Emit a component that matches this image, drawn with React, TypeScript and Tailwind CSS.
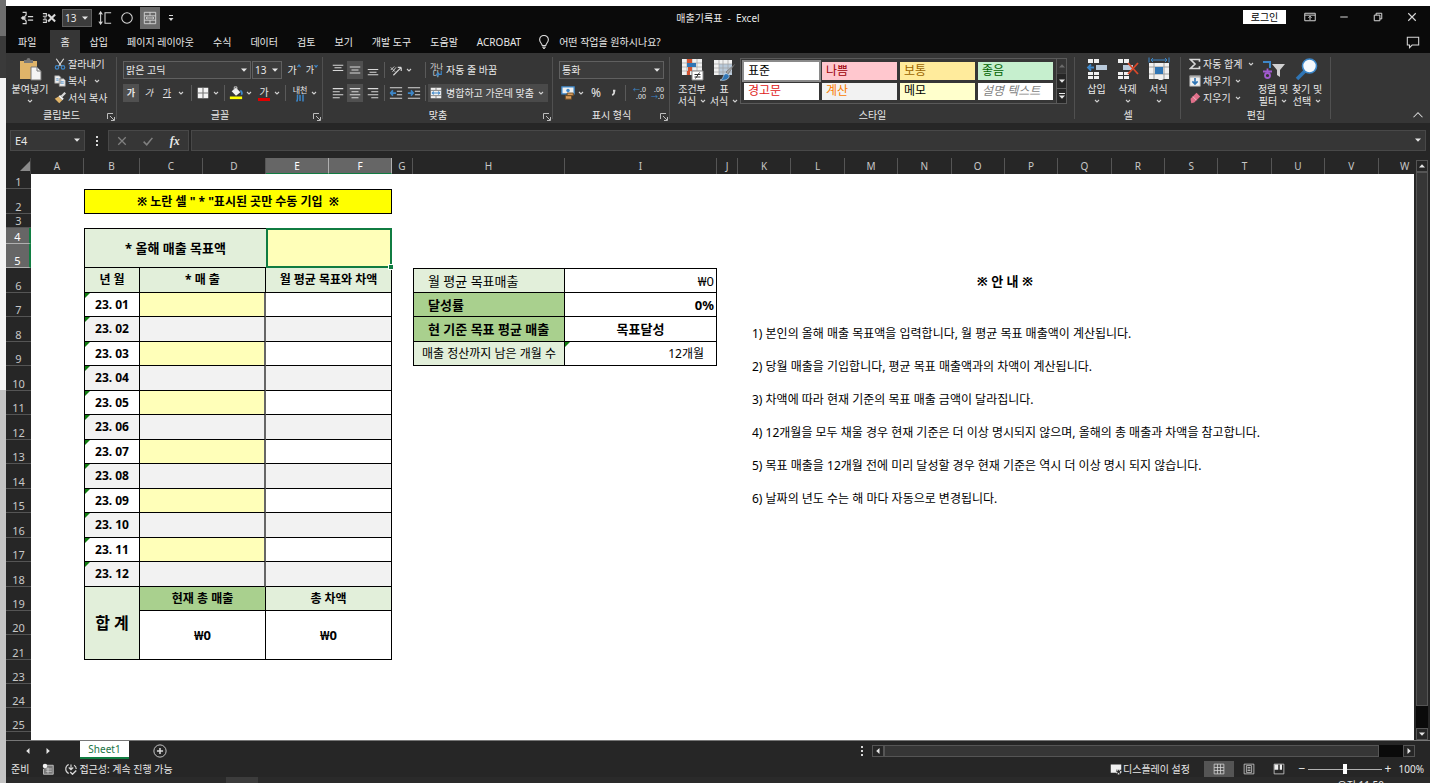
import React, { useState } from 'react';

const COLUMNS = 'ABCDEFGHIJKLMNOPQRSTUVW'.split('');
const SELECTED_COLUMNS = ['E', 'F'];

const RIBBON_TABS = ['파일', '홈', '삽입', '페이지 레이아웃', '수식', '데이터', '검토', '보기', '개발 도구', '도움말', 'ACROBAT'];

const CELL_STYLES = [
    { label: '표준', className: 'bg-white text-black outline-2 outline-[#8a8a8a]' },
    { label: '나쁨', className: 'bg-[#ffc7ce] text-[#9c0006]' },
    { label: '보통', className: 'bg-[#ffeb9c] text-[#9c6500]' },
    { label: '좋음', className: 'bg-[#c6efce] text-[#006100]' },
    { label: '경고문', className: 'bg-white text-[#e02020]' },
    { label: '계산', className: 'bg-[#f2f2f2] text-[#fa7d00]' },
    { label: '메모', className: 'bg-[#ffffcc] text-black' },
    { label: '설명 텍스트', className: 'bg-white text-[#7f7f7f] italic' },
];

const MONTHS = ['01', '02', '03', '04', '05', '06', '07', '08', '09', '10', '11', '12'];

const GUIDE = [
    '1) 본인의 올해 매출 목표액을 입력합니다, 월 평균 목표 매출액이 계산됩니다.',
    '2) 당월 매출을 기입합니다, 평균 목표 매출액과의 차액이 계산됩니다.',
    '3) 차액에 따라 현재 기준의 목표 매출 금액이 달라집니다.',
    '4) 12개월을 모두 채울 경우 현재 기준은 더 이상 명시되지 않으며, 올해의 총 매출과 차액을 참고합니다.',
    '5) 목표 매출을 12개월 전에 미리 달성할 경우 현재 기준은 역시 더 이상 명시 되지 않습니다.',
    '6) 날짜의 년도 수는 해 마다 자동으로 변경됩니다.',
];

interface IconProps {
    className?: string;
    children?: React.ReactNode;
}

// 16px line icon base
const Icon: React.FC<IconProps> = ({ className = 'size-4', children }) => (
    <svg viewBox="0 0 16 16" className={`shrink-0 ${className}`} fill="none" stroke="#d8d8d8" strokeWidth="1" aria-hidden="true">
        {children}
    </svg>
);

const BigIcon: React.FC<IconProps> = ({ children }) => (
    <svg viewBox="0 0 24 24" className="size-6 shrink-0" fill="none" aria-hidden="true">
        {children}
    </svg>
);

const Chevron = () => (
    <svg viewBox="0 0 6 6" className="size-1.5 shrink-0" fill="none" stroke="#d0d0d0" strokeWidth="1.1" aria-hidden="true">
        <path d="M1 2l2 2 2-2" />
    </svg>
);

const Triangle: React.FC<{ className?: string }> = ({ className = '' }) => (
    <svg viewBox="0 0 6 6" className={`size-1.5 shrink-0 ${className}`} fill="#e6e6e6" aria-hidden="true">
        <path d="M0 1.5h6L3 4.8z" />
    </svg>
);

const Separator = () => <span className="h-4 w-px shrink-0 bg-[#5a5a5a]" />;

const Dots = () => (
    <svg viewBox="0 0 4 10" className="h-2.5 w-1 shrink-0" fill="#d8d8d8" aria-hidden="true">
        <path d="M1 0h2v2H1zM1 4h2v2H1zM1 8h2v2H1z" />
    </svg>
);

interface IconButtonProps {
    label: string;
    className?: string;
    children: React.ReactNode;
}

const IconButton: React.FC<IconButtonProps> = ({ label, className = 'w-[18px]', children }) => (
    <button type="button" aria-label={label} className={`flex h-[18px] shrink-0 items-center justify-center ${className}`}>
        {children}
    </button>
);

interface SelectBoxProps {
    label: string;
    value: string;
    className: string;
}

const SelectBox: React.FC<SelectBoxProps> = ({ label, value, className }) => (
    <div className={`relative h-[18px] shrink-0 ${className}`}>
        <select aria-label={label} className="h-full w-full appearance-none border border-[#606060] bg-[#3c3c3c] px-0.5 leading-4 outline-none">
            <option>{value}</option>
        </select>
        <Triangle className="absolute top-1.5 right-1" />
    </div>
);

interface GroupProps {
    title: string;
    className: string;
    launcher?: boolean;
    children: React.ReactNode;
}

const Group: React.FC<GroupProps> = ({ title, className, launcher, children }) => (
    <section className={`relative flex shrink-0 flex-col ${className}`}>
        <div className="flex h-[55px]">{children}</div>
        <div className="text-center leading-[15px]">{title}</div>
        {launcher && (
            <button type="button" aria-label={`${title} 설정`} className="absolute right-0.5 bottom-0.5">
                <svg viewBox="0 0 8 8" className="size-2" fill="none" stroke="#bdbdbd" aria-hidden="true">
                    <path d="M.5 6V.5H6M3 3l4 4M7.5 4v3.5H4" />
                </svg>
            </button>
        )}
        <span className="absolute top-1 right-0 bottom-1 w-px bg-[#505050]" />
    </section>
);

interface BigButtonProps {
    icon: React.ReactNode;
    lines: string[];
    className: string;
}

const BigButton: React.FC<BigButtonProps> = ({ icon, lines, className }) => (
    <button type="button" className={`flex shrink-0 flex-col items-center pt-1 leading-3 whitespace-nowrap ${className}`}>
        {icon}
        <span className="mt-0.5">{lines[0]}</span>
        <span className="flex h-3 items-center gap-1">
            {lines[1]}
            <Chevron />
        </span>
    </button>
);

const SmallButton: React.FC<{ icon: React.ReactNode; label: string; chevron?: string }> = ({ icon, label, chevron }) => (
    <button type="button" className="flex h-[17px] items-center gap-0.5 whitespace-nowrap">
        {icon}
        {label}
        {chevron && <span className={chevron}><Chevron /></span>}
    </button>
);

const TitleBar = () => (
    <header className="relative flex h-6 shrink-0 items-center justify-between">
        <div className="flex items-center pl-3">
            <IconButton label="그룹">
                <Icon className="size-3.5">
                    <path d="M3 1.500h4v3L4 8l3 3.500v3H3M1 8h6M9 6.500h6M9 10.500h6M4 6L2 8l2 2" strokeWidth="1.300" />
                </Icon>
            </IconButton>
            <IconButton label="그룹 해제" className="ml-1 w-[18px]">
                <Icon className="size-3.5">
                    <path d="M1 3h4v3H1M2 8h3M1 13h4v-3H1" strokeWidth="1.200" />
                    <path d="M7 4l8 8M15 4l-8 8" strokeWidth="2.400" />
                </Icon>
            </IconButton>
            <SelectBox label="글꼴 크기" value="13" className="ml-1 w-[30px]" />
            <IconButton label="줄 높이" className="ml-1 w-[18px]">
                <Icon className="size-3.5">
                    <path d="M3 1v14M1 4l2-3 2 3M1 12l2 3 2-3M15 2H8v12h7" strokeWidth="1.200" />
                </Icon>
            </IconButton>
            <IconButton label="타원" className="ml-1 w-[18px]">
                <Icon className="size-3">
                    <circle cx="8" cy="8" r="7" strokeWidth="1.400" />
                </Icon>
            </IconButton>
            <button type="button" aria-label="셀 병합" className="ml-1 flex h-[22px] w-5 items-center justify-center bg-[#6a6a6a]">
                <Icon className="size-3.5">
                    <path d="M1.500 1.500h13v13h-13zM1.500 5.500h13M1.500 10.500h13M8 1.500v4M8 10.500v4M3.500 8h9M5 6.800L3.500 8 5 9.200M11 6.800L12.500 8 11 9.200" />
                </Icon>
            </button>
            <IconButton label="빠른 실행 도구 모음 사용자 지정" className="ml-0.5 w-[18px]">
                <svg viewBox="0 0 6 8" className="h-2 w-1.5" fill="#d8d8d8" aria-hidden="true">
                    <path d="M1 1h4v1H1zM.5 4h5L3 7z" />
                </svg>
            </IconButton>
        </div>
        <h1 className="absolute left-1/2 -translate-x-1/2 whitespace-pre">매출기록표  -  Excel</h1>
        <div className="flex items-center pb-0.5">
            <button type="button" className="mr-3.5 h-3.5 w-[43px] bg-white leading-3 text-black">로그인</button>
            <IconButton label="리본 메뉴 표시 옵션" className="w-5">
                <Icon className="size-3">
                    <path d="M1 3h14v10H1zM1 5.500h14M8 12V7M6 9l2-2 2 2" strokeWidth="1.300" />
                </Icon>
            </IconButton>
            <IconButton label="최소화" className="ml-3.5 w-5">
                <Icon className="size-2.5"><path d="M2 8h12" strokeWidth="1.600" /></Icon>
            </IconButton>
            <IconButton label="이전 크기로 복원" className="ml-3.5 w-5">
                <Icon className="size-2.5">
                    <path d="M2 5h9v9H2zM5 5V2h9v9h-3" strokeWidth="1.600" />
                </Icon>
            </IconButton>
            <IconButton label="닫기" className="mr-2 ml-3.5 w-5">
                <Icon className="size-2.5"><path d="M2 2l12 12M14 2L2 14" strokeWidth="1.800" /></Icon>
            </IconButton>
        </div>
    </header>
);

const TabBar = () => (
    <nav className="flex h-[23px] shrink-0 items-stretch gap-px pl-[3px]">
        {RIBBON_TABS.map((tab) => (
            <button
                key={tab}
                type="button"
                className={tab === '홈' ? 'ml-1 bg-[#363636] px-2.5' : 'px-[9px]'}
            >
                {tab}
            </button>
        ))}
        <button type="button" className="flex items-center gap-2 pl-1.5">
            <Icon className="size-3.5">
                <path d="M6 12c0-2-3-3.500-3-6.500a5 5 0 0110 0C13 8.500 10 10 10 12zM6 13.800h4M7 15.500h2" strokeWidth="1.300" />
            </Icon>
            어떤 작업을 원하시나요?
        </button>
        <button type="button" aria-label="메모" className="mr-2.5 ml-auto">
            <Icon className="size-3.5">
                <path d="M1.500 2.500h13v9H7l-3 3v-3H1.500z" strokeWidth="1.200" />
            </Icon>
        </button>
    </nav>
);

const ClipboardGroup = () => (
    <Group title="클립보드" className="w-[111px]" launcher>
        <BigButton
            className="ml-1.5 w-9"
            lines={['붙여넣기', '']}
            icon={
                <BigIcon>
                    <path d="M2 4h17v18H2z" fill="#e0b469" />
                    <path d="M6 3h2.500a2 2 0 014 0H15v3H6z" fill="#777" />
                    <path d="M13 10h6l4 4v9H13z" fill="#f4f4f4" stroke="#777" />
                    <path d="M19 10v4h4" stroke="#777" />
                </BigIcon>
            }
        />
        <div className="ml-1.5 flex flex-col pt-0.5">
            <SmallButton
                label="잘라내기"
                icon={
                    <Icon className="size-3">
                        <path d="M3 1l7 10M13 1L6 11" strokeWidth="1.600" />
                        <circle cx="4" cy="12.500" r="2.300" stroke="#3d87c9" strokeWidth="1.600" />
                        <circle cx="12" cy="12.500" r="2.300" stroke="#3d87c9" strokeWidth="1.600" />
                    </Icon>
                }
            />
            <SmallButton
                label="복사"
                chevron="ml-1.5"
                icon={
                    <Icon className="size-3">
                        <path d="M1 1h6l2 2v8H1zM7 5h6l2 2v8H7z" fill="#f0f0f0" stroke="#8a8a8a" />
                        <path d="M3 5h3M3 7h3M9 9h4M9 11h4" stroke="#3d87c9" />
                    </Icon>
                }
            />
            <SmallButton
                label="서식 복사"
                icon={
                    <Icon className="size-3">
                        <path d="M1 9l5-3 5 5-4 4z" fill="#e0b469" stroke="none" />
                        <path d="M6 6l2-2 5 5-2 2z" fill="#f4f4f4" stroke="none" />
                        <path d="M10 6l5-5" strokeWidth="3" />
                    </Icon>
                }
            />
        </div>
    </Group>
);

const FontGroup = () => (
    <Group title="글꼴" className="w-[206px]" launcher>
        <div className="flex flex-col gap-[5px] pt-2 pl-1.5">
            <div className="flex items-center">
                <SelectBox label="글꼴" value="맑은 고딕" className="w-32" />
                <SelectBox label="글꼴 크기" value="13" className="ml-px w-[30px]" />
                <IconButton label="글꼴 크기 크게" className="ml-1 w-4">
                    가<Icon className="mb-2 size-1"><path d="M2 12l6-8 6 8" stroke="#3d87c9" strokeWidth="5" /></Icon>
                </IconButton>
                <IconButton label="글꼴 크기 작게" className="ml-0.5 w-4 text-[9px]">
                    가<Icon className="mb-2 size-1"><path d="M2 4l6 8 6-8" stroke="#3d87c9" strokeWidth="5" /></Icon>
                </IconButton>
            </div>
            <div className="flex items-center text-[9px]">
                <IconButton label="굵게" className="w-4 bg-[#505050] font-bold">가</IconButton>
                <IconButton label="기울임꼴" className="ml-0.5 w-4 italic">가</IconButton>
                <IconButton label="밑줄" className="ml-0.5 w-4 underline">가</IconButton>
                <IconButton label="밑줄 종류" className="w-3"><Chevron /></IconButton>
                <span className="w-1" />
                <Separator />
                <IconButton label="테두리" className="ml-0.5 w-[18px]">
                    <Icon className="size-3">
                        <path d="M1 1h14v14H1z" fill="#f4f4f4" stroke="none" />
                        <path d="M8 1v14M1 8h14" stroke="#777" strokeWidth="1.500" />
                    </Icon>
                </IconButton>
                <IconButton label="테두리 종류" className="w-2"><Chevron /></IconButton>
                <span className="w-1" />
                <Separator />
                <IconButton label="채우기 색" className="ml-0.5 w-[18px]">
                    <Icon className="size-3.5">
                        <path d="M3 6l5-4 5 5-5 4z" fill="#f0f0f0" stroke="none" />
                        <path d="M6 5V1h3v3" />
                        <path d="M13 5c2 2 2 4 1 5" stroke="#3d87c9" strokeWidth="2" />
                        <path d="M1 12h14v3H1z" fill="#ff0" stroke="none" />
                    </Icon>
                </IconButton>
                <IconButton label="채우기 색 선택" className="w-2"><Chevron /></IconButton>
                <button type="button" aria-label="글꼴 색" className="ml-0.5 flex w-[18px] flex-col items-center text-[10px] leading-3">
                    가
                    <span className="h-[3px] w-3 bg-[#e00000]" />
                </button>
                <IconButton label="글꼴 색 선택" className="w-2"><Chevron /></IconButton>
                <span className="w-1" />
                <Separator />
                <button type="button" aria-label="윗주 필드" className="ml-1 flex w-5 flex-col items-center">
                    <span className="text-[8px] leading-[9px]">내천</span>
                    <Icon className="size-2">
                        <path d="M3 1v8q0 4-2 6M8 2v12M14 1v14" stroke="#3d87c9" strokeWidth="3" />
                    </Icon>
                </button>
                <IconButton label="윗주 설정" className="w-2"><Chevron /></IconButton>
            </div>
        </div>
    </Group>
);

const LINES = {
    top: 'M2 2.500h12M4 5.500h8M2 8.500h12',
    middle: 'M2 4.500h12M4 8h8M2 11.500h12',
    bottom: 'M2 7.500h12M4 10.500h8M2 13.500h12',
    left: 'M2 3h12M2 6.500h8M2 10h12M2 13.500h8',
    center: 'M2 3h12M4 6.500h8M2 10h12M4 13.500h8',
    right: 'M2 3h12M6 6.500h8M2 10h12M6 13.500h8',
    indent: 'M1 2h14M9 6h6M9 10h6M1 14h14',
};

const AlignIcon: React.FC<{ d: string }> = ({ d }) => (
    <Icon className="size-3.5"><path d={d} strokeWidth="1.200" /></Icon>
);

const AlignGroup = () => (
    <Group title="맞춤" className="w-[230px]" launcher>
        <div className="flex flex-col gap-[5px] pt-2 pl-1.5">
            <div className="flex items-center">
                <IconButton label="위쪽 맞춤"><AlignIcon d={LINES.top} /></IconButton>
                <IconButton label="가운데 맞춤" className="w-4 bg-[#505050]"><AlignIcon d={LINES.middle} /></IconButton>
                <IconButton label="아래쪽 맞춤" className="ml-px w-[18px]"><AlignIcon d={LINES.bottom} /></IconButton>
                <span className="w-0.5" />
                <Separator />
                <IconButton label="방향" className="ml-0.5 w-[18px]">
                    <Icon className="size-3.5">
                        <path d="M5 14L14 5M14 5v4M14 5h-4" strokeWidth="1.300" />
                        <path d="M2 8l4-4M4 10l4-5M2 5l5 5" />
                    </Icon>
                </IconButton>
                <IconButton label="방향 선택" className="w-2"><Chevron /></IconButton>
                <span className="w-3" />
                <Separator />
                <button type="button" className="ml-1 flex items-center gap-1 whitespace-nowrap">
                    <span className="relative flex w-3 flex-col text-[7px] leading-[7px]">
                        <span>가나</span>
                        <span>다</span>
                        <Icon className="absolute right-0 bottom-0 size-1.5">
                            <path d="M14 0v9H3M7 4L2 9l5 5" stroke="#3d87c9" strokeWidth="3" />
                        </Icon>
                    </span>
                    자동 줄 바꿈
                </button>
            </div>
            <div className="flex items-center">
                <IconButton label="왼쪽 맞춤"><AlignIcon d={LINES.left} /></IconButton>
                <IconButton label="가로 가운데 맞춤" className="w-4 bg-[#505050]"><AlignIcon d={LINES.center} /></IconButton>
                <IconButton label="오른쪽 맞춤" className="ml-px w-[18px]"><AlignIcon d={LINES.right} /></IconButton>
                <span className="w-0.5" />
                <Separator />
                <IconButton label="내어쓰기" className="ml-0.5 w-[18px]">
                    <Icon className="size-3.5">
                        <path d={LINES.indent} strokeWidth="1.200" />
                        <path d="M8 8H2M4.500 5L2 8l2.500 3" stroke="#3d87c9" strokeWidth="2" />
                    </Icon>
                </IconButton>
                <IconButton label="들여쓰기">
                    <Icon className="size-3.5">
                        <path d={LINES.indent} strokeWidth="1.200" />
                        <path d="M1 8h6M4.500 5L7 8l-2.500 3" stroke="#3d87c9" strokeWidth="2" />
                    </Icon>
                </IconButton>
                <span className="w-0.5" />
                <Separator />
                <button type="button" className="ml-0.5 flex h-[18px] w-[120px] items-center gap-1 bg-[#4a4a4a] pl-0.5 whitespace-nowrap">
                    <Icon className="size-3">
                        <path d="M1 1h14v14H1z" fill="#f0f0f0" stroke="none" />
                        <path d="M1 4.500h14M1 11.500h14M8 1v3M8 12v3" stroke="#666" />
                        <path d="M3 8h10M5 6L3 8l2 2M11 6l2 2-2 2" stroke="#3d87c9" strokeWidth="1.400" />
                    </Icon>
                    병합하고 가운데 맞춤
                    <span className="mr-1 ml-auto"><Chevron /></span>
                </button>
            </div>
        </div>
    </Group>
);

const NumberGroup = () => (
    <Group title="표시 형식" className="w-[117px]" launcher>
        <div className="flex flex-col gap-[5px] pt-2 pl-1.5">
            <SelectBox label="표시 형식" value="통화" className="w-[105px]" />
            <div className="flex items-center">
                <IconButton label="회계 표시 형식">
                    <Icon className="size-3.5">
                        <path d="M1 1h14v8H1z" fill="#f0f0f0" stroke="#3d87c9" strokeWidth="1.500" />
                        <circle cx="8" cy="5" r="2" fill="#3d87c9" stroke="none" />
                        <path d="M7 8h7v3H7zM5 11h7v4H5z" fill="#d79b5b" stroke="#6b4a22" />
                    </Icon>
                </IconButton>
                <IconButton label="통화 선택" className="w-2"><Chevron /></IconButton>
                <IconButton label="백분율 스타일" className="ml-0.5 w-[18px] text-xs">%</IconButton>
                <IconButton label="쉼표 스타일" className="w-4">
                    <Icon className="size-3"><path d="M8 5h2q0 4-3 6" strokeWidth="2.400" /></Icon>
                </IconButton>
                <span className="w-1" />
                <Separator />
                <button type="button" aria-label="자릿수 늘림" className="ml-0.5 w-[18px] text-right text-[7px] leading-[7px]">
                    <span className="block"><span className="text-[#3d87c9]">←</span>.0</span>
                    <span className="block">.00</span>
                </button>
                <button type="button" aria-label="자릿수 줄임" className="w-[18px] text-right text-[7px] leading-[7px]">
                    <span className="block">.00</span>
                    <span className="block"><span className="text-[#3d87c9]">→</span>.0</span>
                </button>
            </div>
        </div>
    </Group>
);

const StyleGroup = () => (
    <Group title="스타일" className="w-[405px]">
        <BigButton
            className="ml-1.5 w-8"
            lines={['조건부', '서식']}
            icon={
                <BigIcon>
                    <path d="M2 2h20v16H2z" fill="#f0f0f0" />
                    <path d="M2 6h20M2 10h20M2 14h20M7 2v16M12 2v16M17 2v16" stroke="#a0a0a0" strokeWidth=".7" />
                    <path d="M7 2h5v4H7zM7 14h3v4H7zM8 10h4v4H8z" fill="#d35230" />
                    <path d="M7 6h9v4H7z" fill="#2f75b5" />
                    <path d="M12 14h11v9H12z" fill="#fff" stroke="#888" />
                    <path d="M14.500 17.500h6M14.500 20h6M19.500 15.500l-4 6" stroke="#333" />
                </BigIcon>
            }
        />
        <BigButton
            className="w-8"
            lines={['표', '서식']}
            icon={
                <BigIcon>
                    <path d="M2 3h18v15H2z" fill="#f0f0f0" />
                    <path d="M7 7h13v11H7z" fill="#b9cadb" />
                    <path d="M2 7h18M2 11h18M2 15h18M7 3v15M11 3v15M16 3v15" stroke="#a0a0a0" strokeWidth=".7" />
                    <path d="M23 7l-7 10-2-2z" fill="#a8a8a8" stroke="#555" strokeWidth=".5" />
                    <path d="M8 23c3 0 3-5 5-6 2-1 5 1 4 3-1 3-6 4-9 3z" fill="#2f75b5" stroke="#dcebf8" strokeWidth=".6" />
                </BigIcon>
            }
        />
        <div className="mt-[5px] flex h-[46px] flex-1 border border-[#5a5a5a]">
            <div className="grid flex-1 grid-cols-4 gap-[3px] p-[3px]">
                {CELL_STYLES.map((style) => (
                    <button key={style.label} type="button" className={`pl-1 text-left text-xs leading-4 whitespace-nowrap ${style.className}`}>
                        {style.label}
                    </button>
                ))}
            </div>
            <div className="flex w-2.5 flex-col divide-y divide-[#5a5a5a] border-l border-[#5a5a5a]">
                <button type="button" aria-label="이전 스타일" className="flex flex-1 items-center justify-center opacity-30"><Triangle className="rotate-180" /></button>
                <button type="button" aria-label="다음 스타일" className="flex flex-1 items-center justify-center bg-[#262626]"><Triangle /></button>
                <button type="button" aria-label="스타일 더 보기" className="flex flex-1 flex-col items-center justify-center bg-[#262626]">
                    <span className="h-px w-1.5 bg-[#e6e6e6]" />
                    <Triangle />
                </button>
            </div>
        </div>
        <span className="w-2" />
    </Group>
);

const CellGroup = () => (
    <Group title="셀" className="w-[106px]">
        <BigButton
            className="ml-1.5 w-[31px]"
            lines={['삽입', '']}
            icon={
                <BigIcon>
                    <path d="M3 2h5v4H3zM9 2h5v4H9zM3 15h5v3H3zM9 15h5v3H9zM3 19h5v3H3zM9 19h5v3H9z" fill="#f0f0f0" />
                    <path d="M11 8h11v5H11z" fill="#b9cadb" />
                    <path d="M9 10.500H3M6 7.500l-3 3 3 3" stroke="#3d87c9" strokeWidth="1.800" />
                </BigIcon>
            }
        />
        <BigButton
            className="w-[31px]"
            lines={['삭제', '']}
            icon={
                <BigIcon>
                    <path d="M2 2h5v4H2zM8 2h5v4H8zM2 15h5v3H2zM8 15h5v3H8zM2 19h5v3H2zM8 19h5v3H8z" fill="#f0f0f0" />
                    <path d="M7 8h10v5H7z" fill="#b9cadb" />
                    <path d="M12 6l10 11M22 6L12 17" stroke="#d9492b" strokeWidth="1.800" />
                </BigIcon>
            }
        />
        <BigButton
            className="w-[31px]"
            lines={['서식', '']}
            icon={
                <BigIcon>
                    <path d="M2 6h20v16h-5l-2 1h-3l-1-1H2z" fill="#f0f0f0" />
                    <path d="M2 10h20M2 17h20M7 6v16M17 6v16" stroke="#a0a0a0" />
                    <path d="M8 10h8v7H8z" fill="#2f75b5" />
                    <path d="M2 .5v5M22 .5v5M4 3h16M6 1L4 3l2 2M18 1l2 2-2 2" stroke="#3d87c9" />
                </BigIcon>
            }
        />
    </Group>
);

const EditGroup = () => (
    <Group title="편집" className="w-[150px]">
        <div className="ml-2 flex w-[67px] flex-col pt-0.5">
            <SmallButton
                label="자동 합계"
                chevron="ml-1"
                icon={
                    <Icon className="size-3">
                        <path d="M14 5V2H2l6 6-6 6h12v-3" strokeWidth="2.200" />
                    </Icon>
                }
            />
            <SmallButton
                label="채우기"
                chevron="ml-0.5"
                icon={
                    <Icon className="size-3">
                        <path d="M1 1h14v14H1z" fill="#f0f0f0" stroke="#999" />
                        <path d="M1 2.500h14" stroke="#777" />
                        <path d="M8 4v8M4.500 8.500L8 12l3.500-3.500" stroke="#2f75b5" strokeWidth="2.200" />
                    </Icon>
                }
            />
            <SmallButton
                label="지우기"
                chevron="ml-0.5"
                icon={
                    <Icon className="size-3">
                        <path d="M2 9l8-8 5 5-8 8-4 1z" fill="#e0708a" stroke="none" />
                        <path d="M5 6l5 5" stroke="#f6d0d8" />
                    </Icon>
                }
            />
        </div>
        <BigButton
            className="w-[34px]"
            lines={['정렬 및', '필터']}
            icon={
                <BigIcon>
                    <path d="M2 5h7v6" stroke="#3d87c9" strokeWidth="2" />
                    <path d="M11 7h13l-5 6v7l-3-2v-5z" fill="#d0d0d0" />
                    <path d="M6.500 11.500v2.500M2 14.500h9" stroke="#a25ad0" strokeWidth="1.800" />
                    <circle cx="6.500" cy="18.500" r="2.500" stroke="#a25ad0" strokeWidth="1.800" />
                </BigIcon>
            }
        />
        <BigButton
            className="w-[34px]"
            lines={['찾기 및', '선택']}
            icon={
                <BigIcon>
                    <path d="M10 14l-8 8" stroke="#2f75b5" strokeWidth="3.500" />
                    <circle cx="14.500" cy="9" r="7" fill="#f4f8fc" stroke="#3d87c9" strokeWidth="1.600" />
                </BigIcon>
            }
        />
    </Group>
);

const Ribbon = () => (
    <div className="flex h-[70px] shrink-0 bg-[#363636]">
        <ClipboardGroup />
        <FontGroup />
        <AlignGroup />
        <NumberGroup />
        <StyleGroup />
        <CellGroup />
        <EditGroup />
        <button type="button" aria-label="리본 메뉴 축소" className="mt-auto mr-1.5 mb-0.5 ml-auto">
            <Icon className="size-3"><path d="M2 11l6-6 6 6" strokeWidth="1.400" /></Icon>
        </button>
    </div>
);

const FormulaBar = () => (
    <div className="flex h-[35px] shrink-0 items-start bg-[#262626] pt-[7px] pr-1 pl-1">
        <div className="relative h-[21px] w-[75px] border border-[#484848] bg-[#363636]">
            <input aria-label="이름 상자" defaultValue="E4" className="h-full w-full px-1 text-[11px] outline-none" />
            <Triangle className="absolute top-1.5 right-1" />
        </div>
        <div className="flex h-[21px] w-[23px] items-center justify-center"><Dots /></div>
        <div className="flex h-[21px] w-[81px] items-center justify-around border border-[#484848] bg-[#363636]">
            <IconButton label="취소">
                <Icon className="size-2.5"><path d="M2 2l12 12M14 2L2 14" stroke="#808080" strokeWidth="2" /></Icon>
            </IconButton>
            <IconButton label="입력">
                <Icon className="size-2.5"><path d="M1 9l5 5L15 3" stroke="#808080" strokeWidth="2.500" /></Icon>
            </IconButton>
            <IconButton label="함수 삽입" className="w-[18px] font-['Liberation_Serif'] text-xs font-bold italic">fx</IconButton>
        </div>
        <div className="relative ml-0.5 h-[21px] flex-1 border border-[#484848] bg-[#363636]">
            <input aria-label="수식 입력줄" className="h-full w-full px-1 outline-none" />
            <Triangle className="absolute top-1.5 right-1" />
        </div>
    </div>
);

const ErrorMark = () => (
    <svg viewBox="0 0 5 5" className="absolute top-0 left-0 size-[5px]" fill="#107c10" aria-hidden="true">
        <path d="M0 0h5L0 5z" />
    </svg>
);

interface SheetRowProps {
    n: number | string;
    height: string;
    selected?: boolean;
    children?: React.ReactNode;
}

const SheetRow: React.FC<SheetRowProps> = ({ n, height, selected, children }) => (
    <tr>
        <th
            scope="row"
            className={`border-b align-bottom text-[11px] leading-3 font-normal ${height} ${
                selected
                    ? 'border-r-2 border-r-[#107c41] border-b-[#b0b0b0] bg-[#666] text-white'
                    : 'border-b-[#555] bg-[#262626] text-[#c8c8c8]'
            }`}
        >
            {n}
        </th>
        {children}
    </tr>
);

const Blank: React.FC<{ span?: number }> = ({ span = 1 }) => <td colSpan={span} />;

// 6행부터 9행까지의 요약 표
const SUMMARY = [
    { label: '월 평균 목표매출', value: '₩0', head: 'bg-[#e2efda] border-t pl-3.5 text-[13px]', cell: 'border-t pr-0.5 text-right text-[13px]' },
    { label: '달성률', value: '0%', head: 'bg-[#a9d08e] pl-3.5 text-[13px] font-bold', cell: 'pr-0.5 text-right text-[13px] font-bold' },
    { label: '현 기준 목표 평균 매출', value: '목표달성', head: 'bg-[#a9d08e] pl-3.5 text-[13px] font-bold', cell: 'text-center text-[13px] font-bold' },
    { label: '매출 정산까지 남은 개월 수', value: '12개월', head: 'bg-[#e2efda] text-center text-xs', cell: 'pr-3 text-right text-xs', mark: true },
];

const SummaryCells: React.FC<{ index: number }> = ({ index }) => {
    const item = SUMMARY[index];
    if (!item) return <Blank span={4} />;
    return (
        <>
            <Blank />
            <td className={`border-x border-b border-black ${item.head}`}>{item.label}</td>
            <td className={`relative border-r border-b border-black ${item.cell}`}>
                {item.mark && <ErrorMark />}
                {item.value}
            </td>
            <Blank />
        </>
    );
};

const Sheet = () => (
    <table className="w-[calc(100%+18px)] table-fixed border-separate border-spacing-0 text-xs leading-4 whitespace-nowrap text-black [&_td]:py-0">
        <colgroup>
            <col className="w-[25px]" />
            <col className="w-[53px]" />
            <col className="w-[56px]" />
            <col className="w-[63px]" />
            <col className="w-[63px]" />
            <col className="w-[63px]" />
            <col className="w-[63px]" />
            <col className="w-[21px]" />
            <col className="w-[152px]" />
            <col className="w-[152px]" />
            <col className="w-[21px]" />
            {COLUMNS.slice(10).map((column) => <col key={column} />)}
        </colgroup>
        <thead>
            <tr className="bg-[#262626] text-[10px] leading-[14px] text-[#c8c8c8]">
                <th className="h-4 border-r border-[#444] p-0" aria-label="모두 선택">
                    <svg viewBox="0 0 10 10" className="ml-auto size-2.5" fill="#8a8a8a" aria-hidden="true">
                        <path d="M10 0v10H0z" />
                    </svg>
                </th>
                {COLUMNS.map((column) => (
                    <th
                        key={column}
                        scope="col"
                        className={`p-0 font-normal ${
                            SELECTED_COLUMNS.includes(column)
                                ? 'border-r border-b border-r-[#b0b0b0] border-b-[#107c41] bg-[#666] text-white'
                                : 'border-r border-[#555]'
                        }`}
                    >
                        {column}
                    </th>
                ))}
            </tr>
        </thead>
        <tbody>
            <SheetRow n={1} height="h-[15px]"><Blank span={23} /></SheetRow>
            <SheetRow n={2} height="h-[25px]">
                <Blank />
                <td colSpan={5} className="border border-black bg-[#ffff00] text-center font-bold whitespace-pre">
                    ※ 노란 셀 " * "표시된 곳만 수동 기입  ※
                </td>
                <Blank span={17} />
            </SheetRow>
            <SheetRow n={3} height="h-[14px]"><Blank span={23} /></SheetRow>
            <SheetRow n={4} height="h-[16px]" selected>
                <Blank />
                <td colSpan={3} rowSpan={2} className="border border-r-0 border-black bg-[#e2efda] text-center text-[13px] font-bold">
                    * 올해 매출 목표액
                </td>
                <td colSpan={2} rowSpan={2} className="relative border-2 border-[#107c41] bg-[#ffffb9]">
                    <span className="absolute -right-1 -bottom-1 size-1.5 border border-white bg-[#107c41]" />
                </td>
                <Blank span={17} />
            </SheetRow>
            <SheetRow n={5} height="h-[24px]" selected>
                <Blank />
                <Blank span={17} />
            </SheetRow>
            <SheetRow n={6} height="h-[25px]">
                <Blank />
                <td className="border-x border-b border-black bg-[#e2efda] text-center font-bold">년 월</td>
                <td colSpan={2} className="border-r border-b border-black bg-[#e2efda] text-center font-bold">* 매 출</td>
                <td colSpan={2} className="border-r border-b border-black bg-[#e2efda] text-center font-bold">월 평균 목표와 차액</td>
                <SummaryCells index={0} />
                <td colSpan={10} className="text-center text-[13px] font-bold">※ 안 내 ※</td>
                <Blank span={3} />
            </SheetRow>
            {MONTHS.map((month, index) => {
                const odd = index % 2 === 0;
                return (
                    <SheetRow key={month} n={index + 7} height={odd ? 'h-[24px]' : 'h-[25px]'}>
                        <Blank />
                        <td className={`relative border-x border-b border-black text-center font-bold ${odd ? 'bg-white' : 'bg-[#f2f2f2]'}`}>
                            <ErrorMark />
                            23. {month}
                        </td>
                        <td
                            colSpan={2}
                            className={`border-r-2 border-b border-black border-r-[#666] ${odd ? 'bg-[#ffffb9]' : 'bg-[#f2f2f2]'}`}
                        />
                        <td colSpan={2} className={`border-r border-b border-black ${odd ? 'bg-white' : 'bg-[#f2f2f2]'}`} />
                        <SummaryCells index={index + 1} />
                        {index === 0 && (
                            <td colSpan={13} rowSpan={12} className="pl-3.5 align-top">
                                <ul className="pt-6 leading-[33px]">
                                    {GUIDE.map((line) => <li key={line}>{line}</li>)}
                                </ul>
                            </td>
                        )}
                    </SheetRow>
                );
            })}
            <SheetRow n={19} height="h-[24px]">
                <Blank />
                <td rowSpan={3} className="border-x border-b border-black bg-[#e2efda] text-center text-base font-bold">합 계</td>
                <td colSpan={2} className="border-r border-b border-black bg-[#a9d08e] text-center font-bold">현재 총 매출</td>
                <td colSpan={2} className="border-r border-b border-black bg-[#e2efda] text-center font-bold">총 차액</td>
                <Blank span={17} />
            </SheetRow>
            <SheetRow n={20} height="h-[24px]">
                <Blank />
                <td colSpan={2} rowSpan={2} className="border-r border-b border-black text-center text-[13px] font-bold">₩0</td>
                <td colSpan={2} rowSpan={2} className="border-r border-b border-black text-center text-[13px] font-bold">₩0</td>
                <Blank span={17} />
            </SheetRow>
            <SheetRow n={21} height="h-[25px]">
                <Blank />
                <Blank span={17} />
            </SheetRow>
            {[23, 24, 25].map((n) => (
                <SheetRow key={n} n={n} height="h-[24px]"><Blank span={23} /></SheetRow>
            ))}
            <SheetRow n="" height="h-[24px]"><Blank span={23} /></SheetRow>
        </tbody>
    </table>
);

const VerticalScroll = () => (
    <div className="flex w-4 shrink-0 flex-col bg-[#262626] pt-0.5 pr-0.5 pl-0.5">
        <button type="button" aria-label="위로" className="flex h-3 items-center justify-center border border-[#555]"><Triangle className="rotate-180" /></button>
        <div className="flex-1 border border-[#555] bg-[#363636]" />
        <div className="h-[22px] bg-[#0a0a0a]" />
        <button type="button" aria-label="아래로" className="flex h-3 items-center justify-center border border-[#555]"><Triangle /></button>
    </div>
);

const SheetTabs = () => (
    <div className="flex h-[21px] shrink-0 items-start border-t border-[#777] bg-[#262626] pr-[15px]">
        <div className="flex h-5 w-[74px] items-center gap-3.5 pl-[19px]">
            <button type="button" aria-label="이전 시트"><Triangle className="rotate-90" /></button>
            <button type="button" aria-label="다음 시트"><Triangle className="-rotate-90" /></button>
        </div>
        <button type="button" className="h-[18px] w-[49px] border-b-2 border-[#107c41] bg-white text-[10px] leading-4 text-[#217346]">Sheet1</button>
        <button type="button" aria-label="새 시트" className="ml-6 flex h-5 items-center">
            <Icon className="size-3.5">
                <circle cx="8" cy="8" r="7" />
                <path d="M8 4.500v7M4.500 8h7" strokeWidth="1.800" />
            </Icon>
        </button>
        <div className="ml-auto flex h-5 w-[555px] items-center">
            <Dots />
            <button type="button" aria-label="왼쪽" className="ml-2 flex h-3 w-3 items-center justify-center border border-[#555]"><Triangle className="rotate-90" /></button>
            <div className="h-3 flex-1 border border-[#555] bg-[#363636]" />
            <div className="h-3 w-6 bg-[#0a0a0a]" />
            <button type="button" aria-label="오른쪽" className="flex h-3 w-3 items-center justify-center border border-[#555]"><Triangle className="-rotate-90" /></button>
        </div>
    </div>
);

const StatusBar = () => {
    const [zoom, setZoom] = useState(100);

    return (
        <footer className="flex h-4 shrink-0 items-center bg-[#262626] pr-1.5 pl-[5px]">
            <span>준비</span>
            <IconButton label="매크로 기록" className="ml-2.5 w-[18px]">
                <Icon className="size-3">
                    <path d="M4 3h11v12H2V8" fill="#777" />
                    <circle cx="4" cy="4" r="3" fill="#f0f0f0" stroke="none" />
                    <path d="M5 8h8M5 11h8M8 6v8" />
                </Icon>
            </IconButton>
            <button type="button" className="ml-2 flex items-center gap-0.5">
                <Icon className="size-3">
                    <path d="M5 2a6.500 6.500 0 000 12M8 2v6M5 6l3 3 3-3M12 3c2 1 3 3 3 5" strokeWidth="1.500" />
                    <path d="M7 12l3 3 5-5" strokeWidth="1.800" />
                </Icon>
                접근성: 계속 진행 가능
            </button>
            <button type="button" className="ml-auto flex items-center gap-px">
                <Icon className="size-3">
                    <path d="M1 2h14v7H8v4H1z" fill="#f0f0f0" stroke="none" />
                    <circle cx="11.500" cy="11.500" r="2.800" strokeWidth="2" strokeDasharray="2 1" />
                </Icon>
                디스플레이 설정
            </button>
            <button type="button" aria-label="기본" className="ml-3.5 flex h-4 w-[30px] items-center justify-center bg-[#555]">
                <Icon className="size-3"><path d="M1.500 1.500h13v13h-13zM1.500 6h13M1.500 10h13M6 1.500v13M10 1.500v13" /></Icon>
            </button>
            <button type="button" aria-label="페이지 레이아웃" className="flex h-4 w-[30px] items-center justify-center">
                <Icon className="size-3"><path d="M1.500 1.500h13v13h-13zM4.500 3.500h7v9h-7zM6 6h4M6 8h4M6 10h4" /></Icon>
            </button>
            <button type="button" aria-label="페이지 나누기 미리 보기" className="flex h-4 w-[30px] items-center justify-center">
                <Icon className="size-3">
                    <path d="M1.500 1.500h13v13h-13z" />
                    <path d="M2 2h5v7H2zM9 2h3v7H9z" fill="#f0f0f0" stroke="none" />
                </Icon>
            </button>
            <button type="button" aria-label="축소" className="ml-0.5 w-3 text-xs">−</button>
            <input
                type="range"
                aria-label="확대/축소"
                min={0}
                max={200}
                value={zoom}
                onChange={(e) => setZoom(Number(e.target.value))}
                className="h-3 w-[74px] appearance-none bg-[linear-gradient(#b0b0b0,#b0b0b0)] bg-[length:100%_1px] bg-center bg-no-repeat [&::-webkit-slider-thumb]:h-2.5 [&::-webkit-slider-thumb]:w-1 [&::-webkit-slider-thumb]:appearance-none [&::-webkit-slider-thumb]:bg-white"
            />
            <button type="button" aria-label="확대" className="w-3 text-xs">+</button>
            <span className="w-[30px] text-right">{zoom}%</span>
        </footer>
    );
};

const App: React.FC = () => {
    return (
        <div className="flex h-screen overflow-hidden bg-white font-['Noto_Sans','Noto_Sans_CJK_KR',sans-serif] text-[10px] leading-3 text-[#e8e8e8]">
            {/* 뒤쪽 창의 가장자리 */}
            <div className="flex w-1.5 shrink-0 flex-col bg-[#c4c4c4]">
                <div className="h-9 bg-[#6e6e6e]" />
                <div className="h-[42px] bg-[#3a3a3a]" />
                <div className="h-[312px] bg-[#f4f4f4]" />
            </div>
            <div className="flex min-w-0 flex-1 flex-col pt-1.5">
                <div className="shrink-0 bg-[#0a0a0a]">
                    <TitleBar />
                    <TabBar />
                </div>
                <Ribbon />
                <FormulaBar />
                <main className="flex min-h-0 flex-1 bg-white">
                    <div className="min-w-0 flex-1 overflow-hidden">
                        <Sheet />
                    </div>
                    <VerticalScroll />
                </main>
                <SheetTabs />
                <StatusBar />
                {/* 작업 표시줄 */}
                <div className="flex h-1.5 shrink-0 overflow-hidden bg-[#2a2a2a]">
                    <div className="ml-[220px] h-full w-8 bg-[#3c3c3c]" />
                    <time className="mt-0.5 mr-[46px] ml-auto">오전 11:50</time>
                </div>
            </div>
        </div>
    );
};

export default App;
